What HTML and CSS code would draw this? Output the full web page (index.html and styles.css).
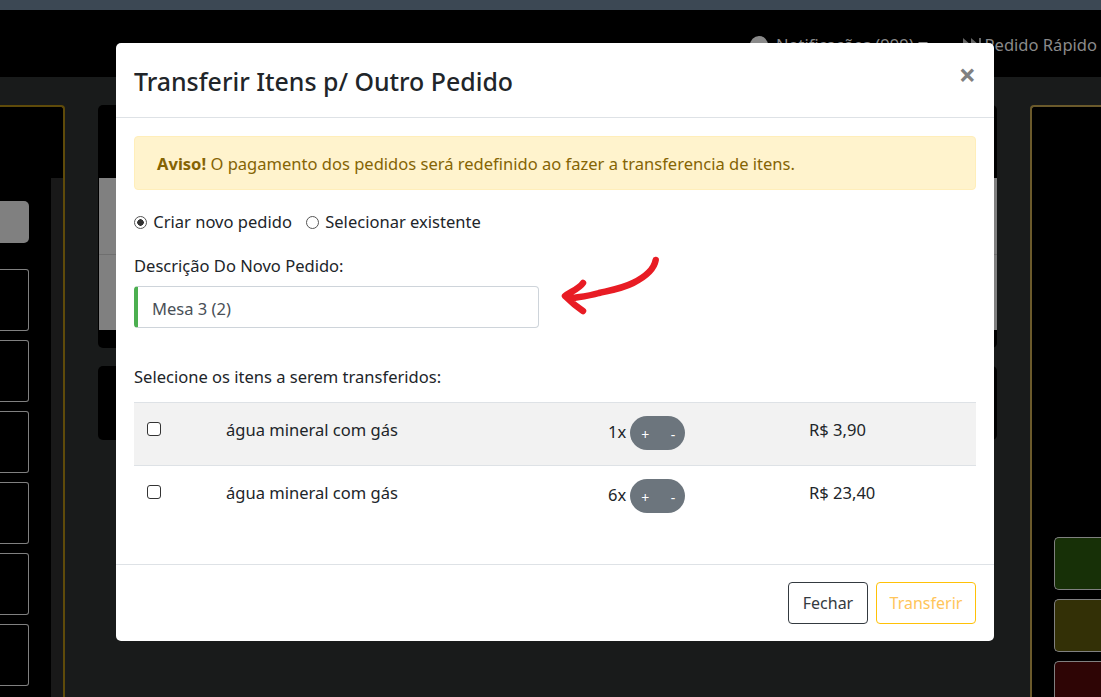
FILE: index.html
```html
<!DOCTYPE html>
<html>
<head>
  <title>Transferir Itens</title>
  <link rel="stylesheet" href="styles.css">
</head>
<body>
  <div class="top-strip"></div>
  <div class="navbar">
    <span class="nav-item"><span class="bell"></span>Notificações (999) <span class="caret"></span></span>
    <span class="nav-item nav-fast">
      <svg class="fast-icon" viewBox="0 0 18 14" width="18" height="14"><path d="M0 0l8 7-8 7zM8 0l8 7V0h2v14h-2V7l-8 7z" fill="#666"/></svg>Pedido Rápido
    </span>
  </div>

  <div class="main">
    <div class="side side-left">
      <div class="side-scroll"></div>
      <div class="left-buttons">
        <div class="btn-gray"></div>
        <div class="btn-line"></div>
        <div class="btn-line"></div>
        <div class="btn-line"></div>
        <div class="btn-line"></div>
        <div class="btn-line"></div>
        <div class="btn-line"></div>
      </div>
    </div>
    <div class="center">
      <div class="card card-table">
        <div class="gray-row"></div>
        <div class="gray-row"></div>
      </div>
      <div class="card card-small"></div>
    </div>
    <div class="side side-right">
      <div class="right-buttons">
        <div class="btn-color green"></div>
        <div class="btn-color olive"></div>
        <div class="btn-color red"></div>
      </div>
    </div>
  </div>

  <div class="modal">
    <div class="modal-header">
      <h5>Transferir Itens p/ Outro Pedido</h5>
      <span class="close">×</span>
    </div>
    <div class="modal-body">
      <div class="alert"><b>Aviso!</b> O pagamento dos pedidos será redefinido ao fazer a transferencia de itens.</div>
      <div class="radios">
        <label><input type="radio" name="tipo" checked> Criar novo pedido</label>
        <label><input type="radio" name="tipo"> Selecionar existente</label>
      </div>
      <label class="field-label">Descrição Do Novo Pedido:</label>
      <input class="field" type="text" value="Mesa 3 (2)">
      <p class="table-title">Selecione os itens a serem transferidos:</p>
      <table>
        <colgroup>
          <col class="col-check"><col class="col-name"><col class="col-qty"><col class="col-price">
        </colgroup>
        <tr class="striped">
          <td><input type="checkbox"></td>
          <td>água mineral com gás</td>
          <td><div class="qty">1x <span class="pill"><span>+</span><span>-</span></span></div></td>
          <td>R$ 3,90</td>
        </tr>
        <tr>
          <td><input type="checkbox"></td>
          <td>água mineral com gás</td>
          <td><div class="qty">6x <span class="pill"><span>+</span><span>-</span></span></div></td>
          <td>R$ 23,40</td>
        </tr>
      </table>
      <svg class="arrow" viewBox="0 0 110 70" width="110" height="70">
        <path d="M100.7 9C99 19 88 27 78 32C66 38 52 40 44 42C34 45 24 46 18 47M28 32C24 38 15 41 10 45C15 50 22 56 28 60" fill="none" stroke="#e81c24" stroke-width="6.5" stroke-linecap="round" stroke-linejoin="round"/>
      </svg>
    </div>
    <div class="modal-footer">
      <button class="btn-close">Fechar</button>
      <button class="btn-send">Transferir</button>
    </div>
  </div>
</body>
</html>
```

FILE: styles.css
```css
* {
  box-sizing: border-box;
}
html, body {
  height: 100%;
}
body {
  margin: 0;
  overflow: hidden;
  background-color: #191b1b;
  font-family: "Noto Sans", "Open Sans", sans-serif;
  font-size: 16.55px;
  color: #212529;
}
.top-strip {
  height: 10px;
  background-color: #3c4854;
}
.navbar {
  height: 67px;
  background-color: #000;
  display: flex;
  justify-content: flex-end;
  align-items: flex-start;
  padding: 23px 4px 0 0;
  color: #8a8a8a;
  white-space: nowrap;
}
.nav-item {
  display: flex;
  align-items: center;
  gap: 4px;
}
.nav-fast {
  margin-left: 35px;
}
.bell {
  width: 18px;
  height: 18px;
  border-radius: 50%;
  background-color: #8a8a8a;
  margin-right: 4px;
}
.caret {
  border-left: 5px solid transparent;
  border-right: 5px solid transparent;
  border-top: 5px solid #8a8a8a;
}
.main {
  display: flex;
  gap: 33px;
  padding-top: 28px;
  height: 620px;
}
.side {
  background-color: #000;
  border-top: 2px solid #6b5a2b;
}
.side-left {
  width: 65px;
  flex: none;
  border-right: 2px solid #5f4b0a;
  border-top-color: #5f4b0a;
  border-top-right-radius: 4px;
  display: flex;
  flex-direction: row-reverse;
}
.side-scroll {
  width: 12px;
  margin-top: 71px;
  background-color: #191919;
}
.left-buttons {
  width: 29px;
  margin-right: 22px;
  padding-top: 94px;
  display: flex;
  flex-direction: column;
}
.btn-gray {
  height: 42px;
  background-color: #808080;
  border-radius: 0 5px 5px 0;
  margin-bottom: 26px;
}
.btn-line {
  height: 62px;
  flex: none;
  border: 1px solid #808080;
  border-left: none;
  border-radius: 0 3px 3px 0;
  margin-bottom: 9px;
}
.center {
  width: 899px;
  flex: none;
}
.card {
  background-color: #000;
  border-radius: 5px;
}
.card-table {
  height: 243px;
  padding: 73px 0 0 1px;
  margin-bottom: 18px;
}
.gray-row {
  height: 77px;
  background-color: #808080;
  border-bottom: 1px solid #6f6f6f;
}
.gray-row + .gray-row {
  height: 75px;
  border-bottom: none;
}
.card-small {
  height: 74px;
}
.side-right {
  flex: 1;
  border-left: 2px solid #6b5a2b;
  border-top-left-radius: 4px;
}
.right-buttons {
  padding: 430px 0 0 22px;
}
.btn-color {
  height: 53px;
  border: 1px solid #808080;
  border-right: none;
  border-radius: 5px 0 0 5px;
  margin-bottom: 9px;
}
.green {
  background-color: #173007;
}
.olive {
  background-color: #333006;
}
.red {
  background-color: #2e0505;
}
.modal {
  position: absolute;
  left: 116px;
  top: 43px;
  width: 878px;
  height: 598px;
  background-color: #fff;
  border-radius: 5px;
  display: flex;
  flex-direction: column;
}
.modal-header {
  height: 75px;
  border-bottom: 1px solid #dee2e6;
  display: flex;
  justify-content: space-between;
  padding: 20px 18px 0;
}
.modal-header h5 {
  margin: 0;
  font-size: 24.9px;
  line-height: 36px;
  font-weight: 500;
}
.close {
  font-size: 30px;
  font-weight: 700;
  line-height: 24px;
  color: #808080;
}
.modal-body {
  flex: 1;
  padding: 18px;
  position: relative;
}
.alert {
  height: 54px;
  line-height: 54px;
  padding-left: 22px;
  background-color: #fff3cd;
  border: 1px solid #ffeeba;
  border-radius: 4px;
  color: #856404;
  margin-bottom: 19px;
}
.radios {
  display: flex;
  gap: 14px;
  line-height: 26px;
  margin-bottom: 19px;
}
.radios input {
  appearance: none;
  width: 13px;
  height: 13px;
  margin: 0 2px 0 0;
  border: 1px solid #555;
  border-radius: 50%;
  vertical-align: -1px;
}
.radios input:checked {
  background: radial-gradient(circle, #333 0 3px, #fff 3.5px);
}
.field-label {
  display: block;
  line-height: 24px;
  margin-bottom: 8px;
}
.field {
  display: block;
  width: 405px;
  height: 42px;
  border: 1px solid #ced4da;
  border-left: 4px solid #4caf50;
  border-radius: 4px;
  padding: 3px 14px 0;
  font: inherit;
  color: #495057;
}
.table-title {
  margin: 37px 0 13px;
  line-height: 24px;
}
table {
  width: 842px;
  table-layout: fixed;
  border-collapse: collapse;
}
.col-check {
  width: 80px;
}
.col-name {
  width: 382px;
}
.col-qty {
  width: 201px;
}
.col-price {
  width: 179px;
}
td {
  height: 63px;
  padding: 12px;
  border-top: 1px solid #dee2e6;
  vertical-align: top;
  line-height: 30px;
  white-space: nowrap;
}
.striped td {
  background-color: #f2f2f2;
  border-bottom: 1px solid #dee2e6;
}
td input {
  appearance: none;
  display: block;
  width: 14px;
  height: 14px;
  margin: 7px 0 0 1px;
  border: 1px solid #333;
  border-radius: 3px;
  background-color: #fff;
}
.qty {
  display: flex;
  gap: 4px;
  align-items: flex-start;
  line-height: 34px;
}
.pill {
  width: 55px;
  height: 34px;
  margin-top: 1px;
  border-radius: 17px;
  background-color: #6c757d;
  color: #fff;
  font-size: 14px;
  line-height: 38px;
  display: flex;
  justify-content: space-between;
  padding: 0 10px 0 11px;
}
.arrow {
  position: absolute;
  left: 439px;
  top: 133px;
}
.modal-footer {
  height: 77px;
  border-top: 1px solid #dee2e6;
  display: flex;
  justify-content: flex-end;
  gap: 8px;
  padding: 17px 18px 0;
}
.modal-footer button {
  height: 42px;
  font: inherit;
  font-size: 16px;
  background-color: #fff;
  border-radius: 4px;
  padding: 0 10px;
}
.btn-close {
  width: 80px;
  border: 1px solid #343a40;
  color: #343a40;
}
.btn-send {
  width: 100px;
  border: 1px solid #ffc107;
  color: #ffc55a;
}
```
